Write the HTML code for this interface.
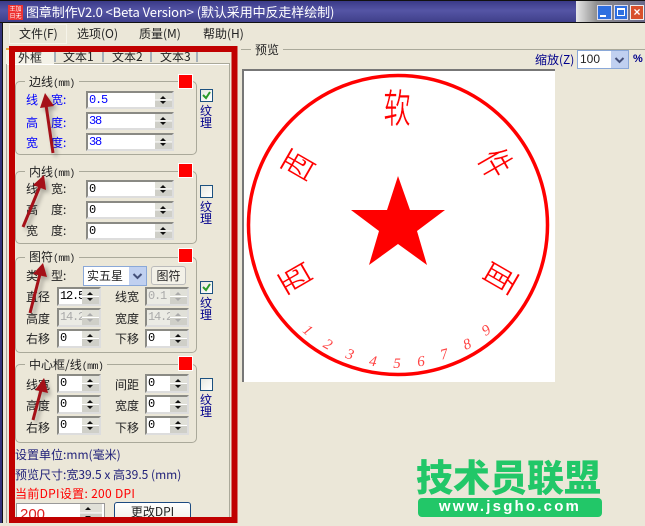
<!DOCTYPE html>
<html><head><meta charset="utf-8">
<style>
*{box-sizing:border-box}
html,body{margin:0;padding:0}
body{width:645px;height:523px;position:relative;overflow:hidden;background:#ebe7d8;font:12px "WenQuanYi Zen Hei","Noto Sans CJK SC",sans-serif;color:#222}
.a{position:absolute;white-space:nowrap}
.g{position:absolute;border:1px solid #aaa99a;border-radius:5px}
.lg{position:absolute;background:#ebe7d8;padding:0 4px;white-space:nowrap;font-size:12px;line-height:14px;color:#222}
.lg small{font:10px/14px "Liberation Mono",monospace;letter-spacing:-.6px}
.r{position:absolute;left:178px;width:15px;height:15px;background:#f00;border:1px solid #fff}
.i{position:absolute;background:#fff;border:2px solid #8a8a84;border-right-color:#ddd;border-bottom-color:#ddd;font:12px/14px "Liberation Mono",monospace;letter-spacing:-1.2px;padding-left:1px;color:#000;overflow:hidden}
.i.d{background:#ebebe4;color:#aaa}
.i.b{color:#00f}
.s{position:absolute;right:0;top:0;bottom:0;width:17px;background:linear-gradient(#e0e0d8 46%,#fff 46%,#fff 54%,#cfcfc8 54%)}
.s:before,.s:after{content:"";position:absolute;left:5px;border-left:3px solid transparent;border-right:3px solid transparent}
.s:before{top:3px;border-bottom:3px solid #111}
.s:after{bottom:3px;border-top:3px solid #111}
.d .s:before{border-bottom-color:#aaa}.d .s:after{border-top-color:#aaa}
.c{position:absolute;left:200px;width:13px;height:13px;border:1px solid #1c5180;background:linear-gradient(135deg,#e8e8e0,#fff)}
.w{position:absolute;left:200px;width:13px;font-size:12px;line-height:12px;color:#00008b;white-space:normal}
.t{position:absolute;font-size:12px;line-height:14px;white-space:nowrap}
.bl{color:#00f}
.dd{position:absolute;background:#c0d0f0}
</style></head><body>

<!-- title bar -->
<div class="a" style="left:0;top:0;width:645px;height:23px;background:linear-gradient(#3a3a88,#5555a5 45%,#3f3f8a);border-top:1px solid #111;border-bottom:1px solid #111"></div>
<div class="a" style="left:576px;top:1px;width:69px;height:21px;background:linear-gradient(90deg,#e8e8e8,#8f8f8f 30%,#6a6a8a)"></div>
<div class="a" style="left:8px;top:5px;width:15px;height:15px;background:#e33;color:#fff;font-size:6px;line-height:7px;text-align:center">王加<br>日无</div>
<div class="a" style="left:26px;top:3px;color:#fff;font-size:13px;line-height:17px;letter-spacing:-.1px">图章制作V2.0 &lt;Beta Version&gt; (默认采用中反走样绘制)</div>
<div class="a" style="left:597px;top:5px;width:15px;height:15px;background:#2f6fe0;border:1px solid #dde"><div style="position:absolute;left:2px;bottom:2px;width:6px;height:2px;background:#fff"></div></div>
<div class="a" style="left:614px;top:5px;width:14px;height:15px;background:#2f6fe0;border:1px solid #dde"><div style="position:absolute;left:2px;top:2px;width:8px;height:8px;border:1px solid #fff;border-top-width:2px"></div></div>
<div class="a" style="left:630px;top:5px;width:14px;height:15px;background:#d8502c;border:1px solid #eee;color:#fff;font:bold 12px/12px 'Liberation Sans',sans-serif;text-align:center">×</div>

<!-- left edge -->
<div class="a" style="left:0;top:23px;width:3px;height:500px;background:#33337a;border-right:1px solid #111"></div>

<!-- menu -->
<div class="a" style="left:9px;top:24px;width:58px;height:20px;border:1px solid #f6f4ea"></div>
<div class="t" style="left:19px;top:27px">文件(F)</div>
<div class="t" style="left:77px;top:27px">选项(O)</div>
<div class="t" style="left:139px;top:27px">质量(M)</div>
<div class="t" style="left:203px;top:27px">帮助(H)</div>

<!-- tabs -->
<div class="a" style="left:6px;top:63px;width:224px;height:460px;border:1px solid #aaa99a;border-bottom:none;background:#ebe7d8;box-shadow:inset 0 1px 0 #fff"></div>
<div class="a" style="left:6px;top:48px;width:48px;height:16px;background:#f4f2e8;border-top:2px solid #e6a83a"></div>
<div class="t" style="left:18px;top:51px">外框</div>
<div class="t" style="left:63px;top:50px">文本1</div>
<div class="t" style="left:112px;top:50px">文本2</div>
<div class="t" style="left:160px;top:50px">文本3</div>
<div class="a" style="left:54px;top:50px;width:2px;height:12px;background:#a5b0b8"></div>
<div class="a" style="left:102px;top:50px;width:2px;height:12px;background:#a5b0b8"></div>
<div class="a" style="left:150px;top:50px;width:2px;height:12px;background:#a5b0b8"></div>
<div class="a" style="left:196px;top:50px;width:2px;height:12px;background:#a5b0b8"></div>

<!-- group 1 -->
<div class="g" style="left:15px;top:81px;width:182px;height:74px"></div>
<div class="lg" style="left:25px;top:75px">边线<small>(mm)</small></div>
<div class="r" style="top:74px"></div>
<div class="t bl" style="left:26px;top:93px">线</div><div class="t bl" style="left:51px;top:93px">宽:</div>
<div class="t bl" style="left:26px;top:116px">高</div><div class="t bl" style="left:51px;top:116px">度:</div>
<div class="t bl" style="left:26px;top:136px">宽</div><div class="t bl" style="left:51px;top:136px">度:</div>
<div class="i b" style="left:86px;top:91px;width:88px;height:18px">0.5<div class="s"></div></div>
<div class="i b" style="left:86px;top:112px;width:88px;height:18px">38<div class="s"></div></div>
<div class="i b" style="left:86px;top:133px;width:88px;height:18px">38<div class="s"></div></div>
<div class="c" style="top:89px"><svg width="11" height="11" style="position:absolute"><path d="M2 5l3 3 4-6" fill="none" stroke="#2a9a2a" stroke-width="2"/></svg></div>
<div class="w" style="top:105px">纹理</div>

<!-- group 2 -->
<div class="g" style="left:15px;top:171px;width:182px;height:73px"></div>
<div class="lg" style="left:25px;top:165px">内线<small>(mm)</small></div>
<div class="r" style="top:163px"></div>
<div class="t" style="left:26px;top:182px">线</div><div class="t" style="left:51px;top:182px">宽:</div>
<div class="t" style="left:26px;top:203px">高</div><div class="t" style="left:51px;top:203px">度:</div>
<div class="t" style="left:26px;top:224px">宽</div><div class="t" style="left:51px;top:224px">度:</div>
<div class="i" style="left:86px;top:180px;width:88px;height:18px">0<div class="s"></div></div>
<div class="i" style="left:86px;top:201px;width:88px;height:18px">0<div class="s"></div></div>
<div class="i" style="left:86px;top:222px;width:88px;height:18px">0<div class="s"></div></div>
<div class="c" style="top:185px"></div>
<div class="w" style="top:201px">纹理</div>

<!-- group 3 -->
<div class="g" style="left:15px;top:257px;width:182px;height:96px"></div>
<div class="lg" style="left:25px;top:250px">图符<small>(mm)</small></div>
<div class="r" style="top:248px"></div>
<div class="t" style="left:26px;top:269px">类</div><div class="t" style="left:51px;top:269px">型:</div>
<div class="a" style="left:83px;top:266px;width:64px;height:20px;background:#fff;border:1px solid #8aa8d8;padding-left:3px;line-height:18px">实五星</div>
<div class="dd" style="left:129px;top:267px;width:17px;height:18px"><svg width="17" height="18" style="position:absolute"><path d="M4.5 7l4 4 4-4" fill="none" stroke="#44507a" stroke-width="2"/></svg></div>
<div class="a" style="left:151px;top:266px;width:35px;height:19px;background:#f3f1e8;border:1px solid #bbb;border-radius:3px;text-align:center;line-height:17px">图符</div>
<div class="t" style="left:26px;top:290px">直径</div><div class="t" style="left:115px;top:290px">线宽</div>
<div class="t" style="left:26px;top:312px">高度</div><div class="t" style="left:115px;top:312px">宽度</div>
<div class="t" style="left:26px;top:332px">右移</div><div class="t" style="left:115px;top:332px">下移</div>
<div class="i" style="left:57px;top:287px;width:44px;height:19px">12.5<div class="s"></div></div>
<div class="i d" style="left:145px;top:287px;width:44px;height:19px">0.1<div class="s"></div></div>
<div class="i d" style="left:57px;top:308px;width:44px;height:19px">14.2<div class="s"></div></div>
<div class="i d" style="left:145px;top:308px;width:44px;height:19px">14.2<div class="s"></div></div>
<div class="i" style="left:57px;top:329px;width:44px;height:19px">0<div class="s"></div></div>
<div class="i" style="left:145px;top:329px;width:44px;height:19px">0<div class="s"></div></div>
<div class="c" style="top:281px"><svg width="11" height="11" style="position:absolute"><path d="M2 5l3 3 4-6" fill="none" stroke="#2a9a2a" stroke-width="2"/></svg></div>
<div class="w" style="top:297px">纹理</div>

<!-- group 4 -->
<div class="g" style="left:15px;top:364px;width:182px;height:79px"></div>
<div class="lg" style="left:25px;top:358px">中心框/线<small>(mm)</small></div>
<div class="r" style="top:356px"></div>
<div class="t" style="left:26px;top:378px">线宽</div><div class="t" style="left:115px;top:378px">间距</div>
<div class="t" style="left:26px;top:399px">高度</div><div class="t" style="left:115px;top:399px">宽度</div>
<div class="t" style="left:26px;top:421px">右移</div><div class="t" style="left:115px;top:421px">下移</div>
<div class="i" style="left:57px;top:374px;width:44px;height:19px">0<div class="s"></div></div>
<div class="i" style="left:145px;top:374px;width:44px;height:19px">0<div class="s"></div></div>
<div class="i" style="left:57px;top:395px;width:44px;height:19px">0<div class="s"></div></div>
<div class="i" style="left:145px;top:395px;width:44px;height:19px">0<div class="s"></div></div>
<div class="i" style="left:57px;top:416px;width:44px;height:19px">0<div class="s"></div></div>
<div class="i" style="left:145px;top:416px;width:44px;height:19px">0<div class="s"></div></div>
<div class="c" style="top:378px"></div>
<div class="w" style="top:394px">纹理</div>

<!-- footer info -->
<div class="t" style="left:15px;top:448px;color:#22227a">设置单位:mm(毫米)</div>
<div class="t" style="left:15px;top:468px;color:#22227a">预览尺寸:宽39.5 x 高39.5 (mm)</div>
<div class="t" style="left:15px;top:487px;color:#f00;letter-spacing:.3px">当前DPI设置: 200 DPI</div>
<div class="a" style="left:16px;top:503px;width:89px;height:20px;background:#fff;border:1px solid #999;color:#d22;font:15px/22px 'Liberation Sans',sans-serif;padding-left:3px">200<div class="s" style="bottom:auto;height:18px;width:22px;right:2px"></div></div>
<div class="a" style="left:114px;top:502px;width:77px;height:21px;background:linear-gradient(#fff,#f0efe6);border:1px solid #1c4a80;border-radius:3px;text-align:center;line-height:18px">更改DPI</div>

<!-- right area -->
<div class="a" style="left:241px;top:49px;width:404px;height:1px;background:#aaa99a"></div>
<div class="a" style="left:251px;top:43px;background:#ebe7d8;padding:0 4px;line-height:14px">预览</div>
<div class="t" style="left:535px;top:53px;color:#00008b">缩放(Z)</div>
<div class="a" style="left:577px;top:50px;width:52px;height:19px;background:#fff;border:1px solid #8aa8d8;font:12px/17px 'Liberation Sans',sans-serif;padding-left:2px">100</div>
<div class="dd" style="left:611px;top:51px;width:17px;height:17px"><svg width="17" height="17" style="position:absolute"><path d="M4.5 7l4 4 4-4" fill="none" stroke="#44507a" stroke-width="2"/></svg></div>
<div class="t" style="left:633px;top:52px;color:#00008b;font:bold 11px/14px 'Liberation Sans',sans-serif">%</div>

<!-- preview -->
<div class="a" style="left:242px;top:69px;width:313px;height:313px;background:#fff;border-left:2px solid #777;border-top:2px solid #777"></div>
<svg class="a" style="left:0;top:0" width="645" height="523" viewBox="0 0 645 523">
<circle cx="398" cy="225" r="149.5" fill="none" stroke="#f00" stroke-width="3.5"/>
<polygon fill="#f00" points="398,176 410,210 445,210 417,231 427,265 398,244 369,265 379,231 351,210 387,210"/>
<g fill="#f00" stroke="#fff" stroke-width=".5" font-family="'IPAGothic','Noto Sans CJK SC',sans-serif" font-size="38" text-anchor="middle">
<text transform="translate(397,108) scale(.72,1.05) translate(0,14)">软</text>
<text transform="translate(298,165) rotate(-60) scale(.72,1.0) translate(0,14)">西</text>
<text transform="translate(496,163) rotate(60) scale(.72,1.0) translate(0,14)">件</text>
<text transform="translate(295,278) rotate(-120) scale(.72,1.0) translate(0,14)">西</text>
<text transform="translate(501,278) rotate(120) scale(.72,1.0) translate(0,14)">面</text>
</g>
<g fill="#f44" font-family="'Liberation Serif',serif" font-size="15" font-style="italic" text-anchor="middle">
<text transform="translate(308,330) rotate(40) translate(0,5)">1</text>
<text transform="translate(328,344) rotate(30) translate(0,5)">2</text>
<text transform="translate(350,354) rotate(18) translate(0,5)">3</text>
<text transform="translate(373,361) rotate(8) translate(0,5)">4</text>
<text transform="translate(397,363) translate(0,5)">5</text>
<text transform="translate(421,361) rotate(-6) translate(0,5)">6</text>
<text transform="translate(444,354) rotate(-14) translate(0,5)">7</text>
<text transform="translate(467,344) rotate(-22) translate(0,5)">8</text>
<text transform="translate(486,330) rotate(-32) translate(0,5)">9</text>
</g>
<!-- arrows -->
<g stroke="#a51018" stroke-width="3" fill="#a51018" style="filter:drop-shadow(3px 3px 2px rgba(0,0,0,.3))">
<line x1="53" y1="153" x2="46" y2="105"/><polygon stroke="none" points="45,93 54,106 40,108"/>
<line x1="23" y1="227" x2="40" y2="186"/><polygon stroke="none" points="44,175 46,190 33,185"/>
<line x1="30" y1="313" x2="40" y2="274"/><polygon stroke="none" points="43,263 47,277 33,274"/>
<line x1="33" y1="420" x2="41" y2="390"/><polygon stroke="none" points="44,378 48,393 35,390"/>
</g>
<!-- red frame -->
<rect x="12" y="49" width="222.5" height="471" fill="none" stroke="#c00000" stroke-width="6"/>
</svg>

<!-- logo -->
<div class="a" style="left:416px;top:453px;width:186px;color:#22c768;font:900 37px/44px 'Noto Sans CJK SC',sans-serif">技术员联盟</div>
<div class="a" style="left:418px;top:498px;width:184px;height:19px;background:#22c768;border-radius:4px;color:#fff;font:bold 15px/18px 'Liberation Sans',sans-serif;text-align:center;letter-spacing:2.2px">www.jsgho.com</div>
</body></html>
